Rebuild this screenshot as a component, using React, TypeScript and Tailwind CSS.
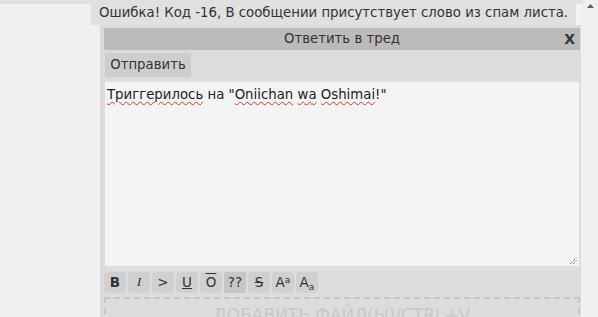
import React from "react";

const font = { fontFamily: '"DejaVu Sans", Verdana, sans-serif' };

function Btn({ children, dark }: { children: React.ReactNode; dark?: boolean }) {
  return (
    <div
      className={
        "w-[22px] h-[21px] flex items-center justify-center text-[13.5px] text-[#333] " +
        (dark ? "bg-[#c6c6c6] rounded-[2px]" : "bg-[#d0d0d0] rounded-[4px]")
      }
    >
      {children}
    </div>
  );
}

const wavy = "underline decoration-wavy decoration-[#e03030] decoration-1 underline-offset-2";

export default function App() {
  return (
    <div className="w-[598px] h-[317px] bg-[#f0f0f0] overflow-hidden flex" style={font}>
      <div className="w-[583px] flex flex-col">
        <div className="flex h-[25px] shrink-0">
          <div className="w-[91px] border-t-4 border-[#e2e2e2]" />
          <div className="w-[485px] bg-[#e0e0e0] pl-[8px] pt-[5px] text-[13.3px] leading-[16px] text-[#333] whitespace-nowrap">
            Ошибка! Код -16, В сообщении присутствует слово из спам листа.
          </div>
          <div className="w-[5px] border-t-4 border-[#e2e2e2] bg-[#f4f4f4]" />
          <div className="flex-1 h-[4px] bg-[#e2e2e2]" />
        </div>
        <div className="ml-[100px] w-[481px] flex-1 bg-[#dcdcdc] pl-[4px] pr-[1px] pt-[3px] flex flex-col">
          <div className="h-[22px] shrink-0 bg-[#bbbbbb] flex items-center relative">
            <div className="flex-1 text-center text-[13.3px] text-[#333]">Ответить в тред</div>
            <div className="absolute right-[5px] top-[3px] text-[14px] font-bold text-[#333] leading-[16px]">X</div>
          </div>
          <div className="mt-[3px] flex shrink-0">
            <div className="ml-[1px] w-[86px] h-[24px] bg-[#cdcdcd] flex items-center justify-center text-[13.3px] text-[#333]">
              Отправить
            </div>
          </div>
          <div className="mt-[5px] ml-[1px] w-[474px] h-[184px] shrink-0 bg-[#f4f4f4] relative px-[2px] pt-[5px] text-[13.3px] leading-[16px] text-[#222]">
            <span className={wavy}>Триггерилось</span> на "
            <span className={wavy}>Oniichan</span>{" "}
            <span className={wavy}>wa</span>{" "}
            <span className={wavy}>Oshimai</span>!"
            <svg className="absolute right-[1px] bottom-[1px]" width="9" height="9" viewBox="0 0 9 9">
              <path d="M1 8 L8 1 M4 8 L8 4" stroke="#555" strokeWidth="1" strokeDasharray="1 1" />
            </svg>
          </div>
          <div className="mt-[6px] flex gap-[2px] shrink-0">
            <Btn><span className="font-bold">B</span></Btn>
            <Btn><span className="italic" style={{ fontFamily: '"Liberation Serif", serif' }}>I</span></Btn>
            <Btn>&gt;</Btn>
            <Btn><span className="underline">U</span></Btn>
            <Btn><span className="overline">O</span></Btn>
            <Btn dark>??</Btn>
            <Btn><span className="line-through">S</span></Btn>
            <Btn><span>A<sup className="text-[9px]">a</sup></span></Btn>
            <Btn><span>A<sub className="text-[9px]">a</sub></span></Btn>
          </div>
          <div className="mt-[4px] w-[476px] h-[60px] shrink-0 border-2 border-dashed border-[#c6c6c6] flex justify-center pt-[6px]">
            <span className="text-[17px] leading-[20px] text-[#c8c8c8] uppercase whitespace-nowrap">ДОБАВИТЬ ФАЙЛ(Ы)/CTRL+V</span>
          </div>
        </div>
      </div>
      <div className="flex-1 flex justify-center pt-[4px]">
        <svg width="7" height="4" viewBox="0 0 7 4"><path d="M0 4 L3.5 0 L7 4 Z" fill="#606060" /></svg>
      </div>
    </div>
  );
}
